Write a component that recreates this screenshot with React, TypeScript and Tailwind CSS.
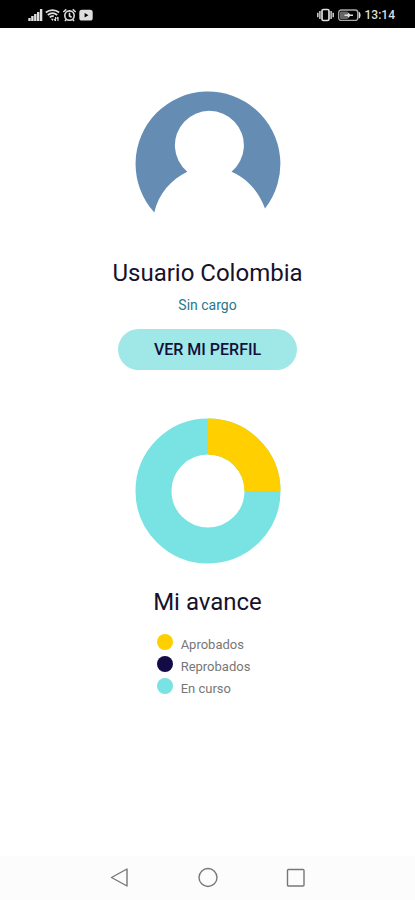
const legend = [
  { label: "Aprobados", dot: "bg-[#ffcf00]" },
  { label: "Reprobados", dot: "bg-[#130b45]" },
  { label: "En curso", dot: "bg-[#79e2e2]" },
];

function StatusBar() {
  return (
    <header className="flex h-7 shrink-0 items-center justify-between bg-black pt-0.5 pr-5 pl-7 text-[#dedede]">
      <div className="flex items-center gap-0.5">
        <svg width="15" height="14" viewBox="0 0 15 14" fill="currentColor" aria-label="Signal">
          <rect x="0.3" y="10" width="2.4" height="3" />
          <rect x="3.2" y="8" width="2.4" height="5" />
          <rect x="6.1" y="6" width="2.4" height="7" />
          <rect x="9" y="4" width="2.4" height="9" />
          <rect x="11.9" y="1" width="2.4" height="12" />
        </svg>
        <svg width="15" height="14" viewBox="0 0 15 14" fill="none" stroke="currentColor" strokeWidth="1.7" aria-label="Wi-Fi">
          <path d="M0.8 4.5C4.7 1.2 10.3 1.2 14.2 4.5" />
          <path d="M2.8 7C5.6 4.7 9.4 4.7 12.2 7" />
          <path d="M4.8 9.4C6.2 8.2 7.6 8 8.8 8.4" />
          <path d="M7.5 13L5.8 10.8H8.5Z" fill="currentColor" stroke="none" />
          <path d="M10.5 13V9M9 11.2L10.5 13M13 9V13M11.6 10.6L13 9" strokeWidth="1.1" />
        </svg>
        <svg width="15" height="14" viewBox="0 0 15 14" fill="none" stroke="currentColor" strokeWidth="1.6" aria-label="Alarm">
          <circle cx="7.5" cy="7.6" r="4.7" />
          <path d="M7.5 4.8V8L9.6 9.2M1.3 4L4.3 1.4M13.7 4L10.7 1.4M4.2 11.4L3 13M10.8 11.4L12 13" />
        </svg>
        <svg width="15" height="14" viewBox="0 0 15 14" aria-label="Video">
          <rect x="0.3" y="1.8" width="13.4" height="10.8" rx="2.6" fill="currentColor" />
          <path d="M5.6 5L9.4 7.2L5.6 9.4Z" fill="#000" />
        </svg>
      </div>
      <div className="flex items-center gap-1">
        <svg width="17" height="14" viewBox="0 0 17 14" fill="none" stroke="currentColor" strokeWidth="1.7" aria-label="Vibrate">
          <rect x="5" y="1.5" width="7" height="11" rx="1.5" />
          <path d="M2.9 3V11M14.1 3V11M0.8 4.7V9.3M16.2 4.7V9.3" strokeWidth="1.4" />
        </svg>
        <svg width="23" height="14" viewBox="0 0 23 14" aria-label="Battery">
          <rect x="0.7" y="2" width="19" height="10.4" rx="2.5" fill="none" stroke="#a8a8a8" strokeWidth="1.3" />
          <rect x="2" y="3.4" width="8" height="7.6" rx="1" fill="#666" />
          <path d="M20.6 3.6C23.2 4.8 23.2 9.6 20.6 10.8Z" fill="currentColor" />
          <path d="M6.5 6.5H9.5L10.5 4.5L12 6.5H15V8H12L10.5 10L9.5 8H6.5Z" fill="currentColor" />
        </svg>
        <span className="text-xs leading-4 font-medium">13:14</span>
      </div>
    </header>
  );
}

function Avatar() {
  return (
    <svg width="146" height="122" viewBox="0 0 146 122" role="img" aria-label="Usuario">
      <path
        d="M19.3 121.5A72.4 72.4 0 1 1 130 117.5C123.5 100.5 113 88 96.5 80.8A34.5 34.5 0 1 0 52.3 80.8C36 88.5 23.5 103 19.3 121.5Z"
        fill="#658db3"
      />
    </svg>
  );
}

function ProgressChart() {
  return (
    <svg width="146" height="146" viewBox="0 0 146 146" fill="none" strokeWidth="36" role="img" aria-label="Mi avance">
      <circle cx="73" cy="73" r="54.5" stroke="#79e2e2" />
      <path d="M73 18.5A54.5 54.5 0 0 1 127.5 73" stroke="#ffcf00" />
    </svg>
  );
}

function NavBar() {
  return (
    <nav className="flex h-11 shrink-0 items-center justify-center gap-16 bg-[#fcfcfc] text-[#777]">
      <button type="button" aria-label="Atrás">
        <svg width="24" height="24" viewBox="0 0 24 24" fill="none" stroke="currentColor" strokeWidth="1.4" strokeLinejoin="round">
          <path d="M19 3V20L3.5 11.5Z" />
        </svg>
      </button>
      <button type="button" aria-label="Inicio">
        <svg width="24" height="24" viewBox="0 0 24 24" fill="none" stroke="currentColor" strokeWidth="1.4">
          <circle cx="12" cy="11.5" r="9" />
        </svg>
      </button>
      <button type="button" aria-label="Recientes">
        <svg width="24" height="24" viewBox="0 0 24 24" fill="none" stroke="currentColor" strokeWidth="1.4">
          <rect x="3.5" y="3.5" width="16.5" height="16.5" rx="1" />
        </svg>
      </button>
    </nav>
  );
}

export default function App() {
  return (
    <div className="flex min-h-screen flex-col bg-white font-['Roboto',sans-serif]">
      <StatusBar />
      <main className="flex flex-1 flex-col items-center pt-[63px]">
        <Avatar />
        <h1 className="mt-11 text-2xl leading-8 text-[#17122b]">Usuario Colombia</h1>
        <p className="mt-1 text-sm leading-6 text-[#29778c]">Sin cargo</p>
        <button
          type="button"
          className="mt-3 h-[41px] rounded-full bg-[#a0e7e7] px-9 text-base font-medium text-[#120f3a]"
        >
          VER MI PERFIL
        </button>
        <div className="mt-12">
          <ProgressChart />
        </div>
        <h2 className="mt-[22px] text-2xl leading-8 text-[#17122b]">Mi avance</h2>
        <ul className="mt-4 mr-2 text-[13px] leading-[22px] text-[#777]">
          {legend.map((item) => (
            <li key={item.label} className="flex gap-2">
              <span className={`h-4 w-4 rounded-full ${item.dot}`} />
              <span>{item.label}</span>
            </li>
          ))}
        </ul>
      </main>
      <NavBar />
    </div>
  );
}
